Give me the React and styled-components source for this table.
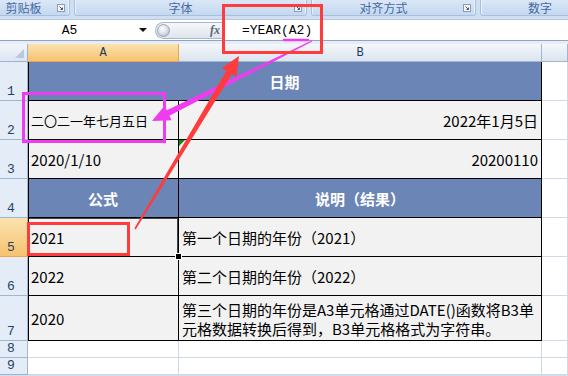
import React from 'react';
import styled, { createGlobalStyle, css } from 'styled-components';

const cjk = `"Noto Sans CJK SC", "Noto Sans", sans-serif`;
const mono = `"Liberation Mono", "Noto Sans CJK SC", monospace`;

const GlobalStyle = createGlobalStyle`
    html, body {
        margin: 0;
        padding: 0;
        background: #fff;
    }
    body {
        width: 568px;
        height: 376px;
        overflow: hidden;
    }
`;

const Screen = styled.div`
    position: relative;
    width: 568px;
    height: 376px;
    overflow: hidden;
    display: flex;
    flex-direction: column;
    background: #cfdef1;
`;

/* ribbon group captions */
const Ribbon = styled.div`
    display: flex;
    gap: 4px;
    height: 16px;
    flex-shrink: 0;
    margin-left: -3px;
`;

const Group = styled.div`
    width: ${p => p.$w}px;
    flex-shrink: 0;
    display: flex;
    align-items: center;
    box-sizing: border-box;
    background: linear-gradient(#dbe7f7, #c4d8f0);
    border: 1px solid #a9c0dd;
    border-top: none;
    border-radius: 0 0 3px 3px;
    box-shadow: inset 1px 0 0 #eaf2fc, inset -1px 0 0 #eaf2fc;
`;

const GroupLabel = styled.span`
    flex: 1;
    text-align: center;
    font-family: ${cjk};
    font-size: 12px;
    line-height: 15px;
    color: #4468a2;
`;

const Launcher = styled.span`
    width: 20px;
    display: flex;
    justify-content: flex-end;
    padding-right: 4px;
    box-sizing: border-box;
`;

const LauncherIcon = () => (
    <svg width="8" height="8" viewBox="0 0 8 8">
        <rect x="0.5" y="0.5" width="7" height="7" fill="#f4f7fb" stroke="#8a9bb3" />
        <path d="M2.5 2.5 L5.5 5.5 M5.5 3.5 V5.5 H3.5" stroke="#44556e" strokeWidth="1" fill="none" />
    </svg>
);

const RibbonGap = styled.div`
    height: 3px;
    flex-shrink: 0;
`;

/* name box + formula input */
const FormulaBar = styled.div`
    height: 22px;
    flex-shrink: 0;
    box-sizing: border-box;
    display: flex;
    align-items: center;
    background: #fff;
    border-top: 1px solid #b5c8e1;
    border-bottom: 1px solid #8ea4c1;
`;

const NameBox = styled.div`
    width: 152px;
    flex-shrink: 0;
    display: flex;
    align-items: center;
`;

const NameText = styled.span`
    flex: 1;
    text-align: center;
    font-family: ${mono};
    font-size: 13px;
    color: #000;
    padding-left: 4px;
`;

const Caret = styled.span`
    width: 0;
    height: 0;
    margin: 0 5px 0 4px;
    border-left: 4px solid transparent;
    border-right: 4px solid transparent;
    border-top: 4px solid #111;
`;

const Knob = styled.div`
    width: 68px;
    height: 17px;
    margin-left: 3px;
    box-sizing: border-box;
    display: flex;
    align-items: center;
    justify-content: space-between;
    border: 1px solid #a7b6ca;
    border-right: none;
    border-radius: 9px 0 0 9px;
    background: linear-gradient(#f5f7fa, #dfe5ee);
`;

const KnobBall = styled.span`
    width: 13px;
    height: 13px;
    margin-left: 1px;
    border-radius: 50%;
    background: radial-gradient(circle at 40% 35%, #ffffff 0%, #d6dbe3 55%, #9aa3b0 100%);
    border: 1px solid #9aa5b5;
    box-sizing: border-box;
`;

const FxLabel = styled.span`
    font-family: "Liberation Serif", serif;
    font-style: italic;
    font-weight: bold;
    font-size: 12px;
    color: #5b6678;
    margin-right: 3px;
`;

const FormulaInput = styled.div`
    flex: 1;
    align-self: stretch;
    display: flex;
    align-items: center;
    padding-left: 18px;
    border-left: 1px solid #9aaac0;
    font-family: ${mono};
    font-size: 13px;
    color: #000;
`;

const HeadGap = styled.div`
    height: 3px;
    flex-shrink: 0;
    background: #e6edf6;
`;

/* worksheet grid */
const Sheet = styled.div`
    display: grid;
    grid-template-columns: 28px 151px 363px 26px;
    grid-template-rows: 18px repeat(6, 39px) 45px repeat(2, 17px);
    background: #fff;
`;

const Corner = styled.div`
    display: flex;
    align-items: flex-end;
    justify-content: flex-end;
    padding: 0 3px 3px 0;
    background: linear-gradient(#f3f6fb, #dce5f1);
    border-right: 1px solid #9db3cd;
    border-bottom: 1px solid #9db3cd;
    &::after {
        content: '';
        width: 0;
        height: 0;
        border-left: 9px solid transparent;
        border-bottom: 9px solid #b9c8dc;
    }
`;

const activeHead = css`
    background: linear-gradient(#fbe3b0, #f5c36f);
    border-color: #eea54b;
`;

const ColHead = styled.div`
    display: flex;
    align-items: center;
    justify-content: center;
    font-family: ${mono};
    font-size: 12px;
    color: #1f3a5f;
    background: linear-gradient(#f4f7fb, #dbe4ef);
    border-right: 1px solid #9eb6ce;
    border-bottom: 1px solid #9eb6ce;
    ${p => p.$active && activeHead}
`;

const RowHead = styled.div`
    display: flex;
    align-items: flex-end;
    justify-content: center;
    padding: 0 5px 1px 0;
    font-family: ${mono};
    font-size: 13px;
    line-height: 15px;
    color: #263f61;
    background: #e4ecf7;
    border-right: 1px solid #9eb6ce;
    border-bottom: 1px solid #9eb6ce;
    ${p => p.$active && activeHead}
`;

const kinds = {
    head: css`
        background: #6b85b6;
        color: #fff;
        font-weight: bold;
        justify-content: center;
        border-right: 1px solid #000;
        border-bottom: 1px solid #000;
    `,
    data: css`
        background: #f2f2f2;
        color: #000;
        border-right: 1px solid #000;
        border-bottom: 1px solid #000;
    `,
    blank: css`
        background: #fff;
        border-right: 1px solid #d0d7e5;
        border-bottom: 1px solid #d0d7e5;
    `,
};

const Cell = styled.div`
    position: relative;
    display: flex;
    align-items: center;
    padding: 1px 3px 0 3px;
    font-family: ${cjk};
    font-size: ${p => p.$size || 15}px;
    line-height: 18px;
    white-space: nowrap;
    overflow: hidden;
    ${p => kinds[p.$kind || 'data']}
    ${p => p.$span && css`grid-column: span ${p.$span};`}
    ${p => p.$right && css`justify-content: flex-end;`}
    ${p => p.$first && css`box-shadow: inset 1px 0 0 #000;`}
    ${p => p.$flag && css`
        &::before {
            content: '';
            position: absolute;
            left: 0;
            top: 0;
            border-top: 6px solid #0a8a0a;
            border-right: 6px solid transparent;
        }
    `}
    ${p => p.$active && css`
        overflow: visible;
        box-shadow: inset 1px 0 0 #000, inset 0 1px 0 #444, inset -1px 0 0 #444;
        &::after {
            content: '';
            position: absolute;
            right: -4px;
            bottom: -4px;
            width: 5px;
            height: 5px;
            background: #000;
            border: 1px solid #fff;
            z-index: 2;
        }
    `}
`;

const Wrapped = styled.span`
    display: block;
    line-height: 19px;
`;

const Overlay = styled.svg`
    position: absolute;
    left: 0;
    top: 0;
    pointer-events: none;
`;

const groups = [
    { w: 73, label: '剪贴板', launcher: true },
    { w: 233, label: '字体', launcher: true },
    { w: 165, label: '对齐方式', launcher: true },
    { w: 120, label: '数字', launcher: false },
];

const Blank = () => <Cell $kind="blank" />;

const App = () => {
    return (
        <>
            <GlobalStyle />
            <Screen>
                <Ribbon>
                    {groups.map(g => (
                        <Group key={g.label} $w={g.w}>
                            <GroupLabel>{g.label}</GroupLabel>
                            {g.launcher && <Launcher><LauncherIcon /></Launcher>}
                        </Group>
                    ))}
                </Ribbon>
                <RibbonGap />
                <FormulaBar>
                    <NameBox>
                        <NameText>A5</NameText>
                        <Caret />
                    </NameBox>
                    <Knob>
                        <KnobBall />
                        <FxLabel>fx</FxLabel>
                    </Knob>
                    <FormulaInput>=YEAR(A2)</FormulaInput>
                </FormulaBar>
                <HeadGap />
                <Sheet>
                    <Corner />
                    <ColHead $active>A</ColHead>
                    <ColHead>B</ColHead>
                    <ColHead />

                    <RowHead>1</RowHead>
                    <Cell $kind="head" $span={2} $first>日期</Cell>
                    <Blank />

                    <RowHead>2</RowHead>
                    <Cell $first $size={13}>二〇二一年七月五日</Cell>
                    <Cell $right>2022年1月5日</Cell>
                    <Blank />

                    <RowHead>3</RowHead>
                    <Cell $first>2020/1/10</Cell>
                    <Cell $right $flag>20200110</Cell>
                    <Blank />

                    <RowHead>4</RowHead>
                    <Cell $kind="head" $first>公式</Cell>
                    <Cell $kind="head">说明（结果）</Cell>
                    <Blank />

                    <RowHead $active>5</RowHead>
                    <Cell $first $active>2021</Cell>
                    <Cell>第一个日期的年份（2021）</Cell>
                    <Blank />

                    <RowHead>6</RowHead>
                    <Cell $first>2022</Cell>
                    <Cell>第二个日期的年份（2022）</Cell>
                    <Blank />

                    <RowHead>7</RowHead>
                    <Cell $first>2020</Cell>
                    <Cell>
                        <div>
                            <Wrapped>第三个日期的年份是A3单元格通过DATE()函数将B3单</Wrapped>
                            <Wrapped>元格数据转换后得到，B3单元格格式为字符串。</Wrapped>
                        </div>
                    </Cell>
                    <Blank />

                    <RowHead>8</RowHead>
                    <Blank /><Blank /><Blank />
                    <RowHead>9</RowHead>
                    <Blank /><Blank /><Blank />
                </Sheet>

                {/* callouts drawn over the sheet */}
                <Overlay width="568" height="376" viewBox="0 0 568 376">
                    <rect x="23.5" y="93.5" width="141" height="48" fill="none" stroke="#f03cf0" strokeWidth="3" />
                    <line x1="284" y1="40" x2="308" y2="40" stroke="#f03cf0" strokeWidth="2.5" strokeLinecap="round" />
                    <polygon
                        points="312.3,41.6 169.4,115.8 171.7,120.2 152,121 164.5,105.8 166.8,110.2 311.7,40.4"
                        fill="#f03cf0"
                    />
                    <rect x="223.5" y="5.5" width="98" height="47" fill="none" stroke="#ff3b3b" strokeWidth="3" />
                    <rect x="28.5" y="223.5" width="100" height="31" fill="none" stroke="#ff3b3b" strokeWidth="3" />
                    <polygon
                        points="135.7,229.4 231.9,74 236.5,76.7 239,56 221.9,67.9 226.5,70.7 134.3,228.6"
                        fill="#ff3b3b"
                    />
                </Overlay>
            </Screen>
        </>
    );
};

export default App;
